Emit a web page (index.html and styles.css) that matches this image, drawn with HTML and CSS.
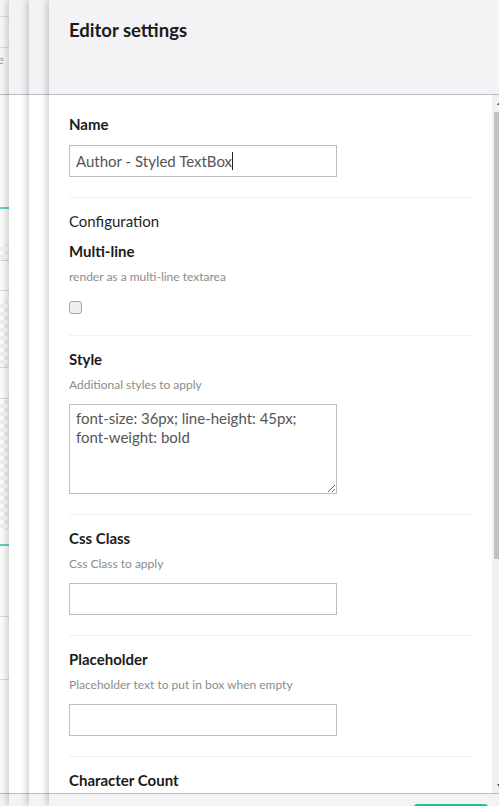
FILE: index.html
```html
<!DOCTYPE html>
<html lang="en">
<head>
<meta charset="utf-8">
<title>Editor settings</title>
<link rel="stylesheet" href="styles.css">
</head>
<body>
<div class="app">
  <div class="backdrop">
    <div class="bd-head">
      <div class="bd-rule"></div>
      <div class="bd-rule r47"></div>
      <div class="bd-word">e</div>
    </div>
    <div class="bd-body">
      <div class="bd-teal t1"></div>
      <div class="bd-check c1"></div>
      <div class="bd-rule"></div>
      <div class="bd-rule g29"></div>
      <div class="bd-check c2"></div>
      <div class="bd-rule"></div>
      <div class="bd-rule g30"></div>
      <div class="bd-check c3"></div>
      <div class="bd-teal t2"></div>
      <div class="bd-rule g70"></div>
      <div class="bd-rule g62"></div>
    </div>
    <div class="bd-foot"></div>
  </div>

  <div class="panel stack">
    <div class="p-head"></div>
    <div class="p-body"></div>
    <div class="p-foot"></div>
  </div>
  <div class="panel stack">
    <div class="p-head"></div>
    <div class="p-body"></div>
    <div class="p-foot"></div>
  </div>

  <div class="panel main">
    <div class="p-head main-head">
      <h1 class="title">Editor settings</h1>
    </div>
    <div class="p-body">
      <div class="content">
        <div class="prop first">
          <label class="label">Name</label>
          <div class="input field name-input">Author - Styled TextBox<span class="caret"></span></div>
        </div>

        <div class="prop">
          <div class="group-title">Configuration</div>
          <label class="label sub">Multi-line</label>
          <div class="desc">render as a multi-line textarea</div>
          <input class="check" type="checkbox">
        </div>

        <div class="prop">
          <label class="label">Style</label>
          <div class="desc">Additional styles to apply</div>
          <textarea class="input field area">font-size: 36px; line-height: 45px; font-weight: bold</textarea>
        </div>

        <div class="prop">
          <label class="label">Css Class</label>
          <div class="desc">Css Class to apply</div>
          <input class="input field" type="text">
        </div>

        <div class="prop">
          <label class="label">Placeholder</label>
          <div class="desc">Placeholder text to put in box when empty</div>
          <input class="input field" type="text">
        </div>

        <div class="prop">
          <label class="label">Character Count</label>
        </div>
      </div>
      <div class="scrollbar">
        <div class="sb-btn sb-up"></div>
        <div class="sb-thumb"></div>
        <div class="sb-space"></div>
        <div class="sb-btn sb-down"></div>
      </div>
    </div>
    <div class="p-foot main-foot">
      <button class="btn" type="button" aria-label="Submit"></button>
    </div>
  </div>
</div>
</body>
</html>
```

FILE: styles.css
```css
* { box-sizing: border-box; }

html, body {
  margin: 0;
  height: 100%;
}

body {
  overflow: hidden;
  background: #fff;
  font-family: Lato, "Open Sans", "Liberation Sans", sans-serif;
  color: #1f1f1f;
}

.app {
  display: flex;
  width: 507px;
  height: 806px;
}

/* underlying page */
.backdrop {
  flex: 0 0 9px;
  display: flex;
  flex-direction: column;
  overflow: hidden;
  background: #fff;
}

.bd-head {
  height: 95px;
  flex: none;
  padding-top: 16px;
  background: #f6f6f7;
  border-bottom: 1px solid #bbb9c4;
}

.bd-rule { height: 1px; background: #d9d9d9; }
.r47 { margin-top: 30px; }
.g29 { margin-top: 29px; }
.g30 { margin-top: 30px; }
.g70 { margin-top: 70px; }
.g62 { margin-top: 62px; }

.bd-word {
  margin: 5px 0 0 -2px;
  font-size: 11px;
  line-height: 14px;
  color: #9a9a9a;
}

.bd-body { flex: 1; background: #fbfbfb; }

.bd-teal { height: 2px; background: #62d0c6; }
.t1 { margin-top: 112px; }
.t2 { margin-top: 14px; }

.bd-check {
  background: repeating-conic-gradient(#efefef 0 25%, #fbfbfb 0 50%) 0 0 / 8px 8px;
}
.c1 { margin-top: 34px; height: 17px; }
.c2 { margin-top: 9px; height: 67px; }
.c3 { margin-top: 1px; height: 130px; }

.bd-foot {
  height: 13px;
  flex: none;
  background: #f3f3f5;
  border-top: 1px solid #bbb9c4;
}

/* stacked overlay panels */
.panel {
  position: relative;
  flex: none;
  display: flex;
  flex-direction: column;
  box-shadow: -2px 0 7px rgba(0, 0, 0, 0.2);
}

.stack { width: 20px; }
.main { width: 458px; }

.p-head {
  height: 95px;
  flex: none;
  background: #f3f3f5;
  border-bottom: 1px solid #bbb9c4;
}

.p-body {
  flex: 1;
  min-height: 0;
  display: flex;
  background: #fff;
}

.p-foot {
  height: 13px;
  flex: none;
  background: #f3f3f5;
  border-top: 1px solid #bbb9c4;
}

/* main panel */
.main-head { padding: 18px 20px 0; }

.title {
  margin: 0;
  font-size: 18.5px;
  line-height: 24px;
  font-weight: 700;
  color: #1b1b1b;
}

.content {
  flex: 1;
  min-width: 0;
  overflow: hidden;
  padding: 19px 20px 0;
}

.prop {
  display: flex;
  flex-direction: column;
  align-items: flex-start;
  padding: 13px 0 20px;
  border-bottom: 1px solid #f0f0f2;
}

.prop.first { padding-top: 0; }

.label {
  display: block;
  font-size: 15px;
  line-height: 20px;
  font-weight: 700;
  color: #1b1b1b;
}

.group-title {
  font-size: 15px;
  line-height: 20px;
  font-weight: 400;
  color: #1f1f1f;
}

.label.sub { margin-top: 10px; }

.desc {
  margin-top: 7px;
  font-size: 12px;
  line-height: 17px;
  color: #8c8c8c;
}

.field { margin-top: 11px; }

.input {
  width: 268px;
  height: 32px;
  margin-bottom: 0;
  padding: 0 6px;
  border: 1px solid #bdbdbd;
  border-radius: 0;
  background: #fff;
  font-family: Lato, "Open Sans", sans-serif;
  font-size: 15px;
  line-height: 29px;
  color: #555;
  outline: none;
}

.name-input {
  display: flex;
  align-items: center;
  white-space: nowrap;
}

.caret {
  display: inline-block;
  width: 1px;
  height: 18px;
  background: #222;
}

.area {
  height: 90px;
  padding: 4px 6px;
  line-height: 19px;
  resize: vertical;
  display: block;
}

.check {
  appearance: none;
  -webkit-appearance: none;
  width: 13px;
  height: 13px;
  margin: 16px 0 1px;
  border: 1px solid #a3a3a3;
  border-radius: 3px;
  background: #efefef;
}

/* scrollbar */
.scrollbar {
  flex: 0 0 15px;
  display: flex;
  flex-direction: column;
  align-items: center;
  background: #f1f1f1;
}

.sb-btn {
  flex: none;
  width: 15px;
  height: 15px;
  display: flex;
  align-items: center;
  justify-content: center;
}

.sb-up::after {
  content: "";
  border-left: 3.5px solid transparent;
  border-right: 3.5px solid transparent;
  border-bottom: 4px solid #505050;
}

.sb-down::after {
  content: "";
  border-left: 3.5px solid transparent;
  border-right: 3.5px solid transparent;
  border-top: 4px solid #505050;
}

.sb-thumb {
  flex: none;
  width: 11px;
  height: 447px;
  margin-top: 2px;
  background: #c1c1c1;
}

.sb-space { flex: 1; }

/* footer */
.main-foot {
  display: flex;
  justify-content: flex-end;
  padding: 10px 19px 0;
  overflow: hidden;
}

.btn {
  flex: none;
  width: 74px;
  height: 34px;
  border: 0;
  border-radius: 3px;
  background: #2bc37c;
}
```
